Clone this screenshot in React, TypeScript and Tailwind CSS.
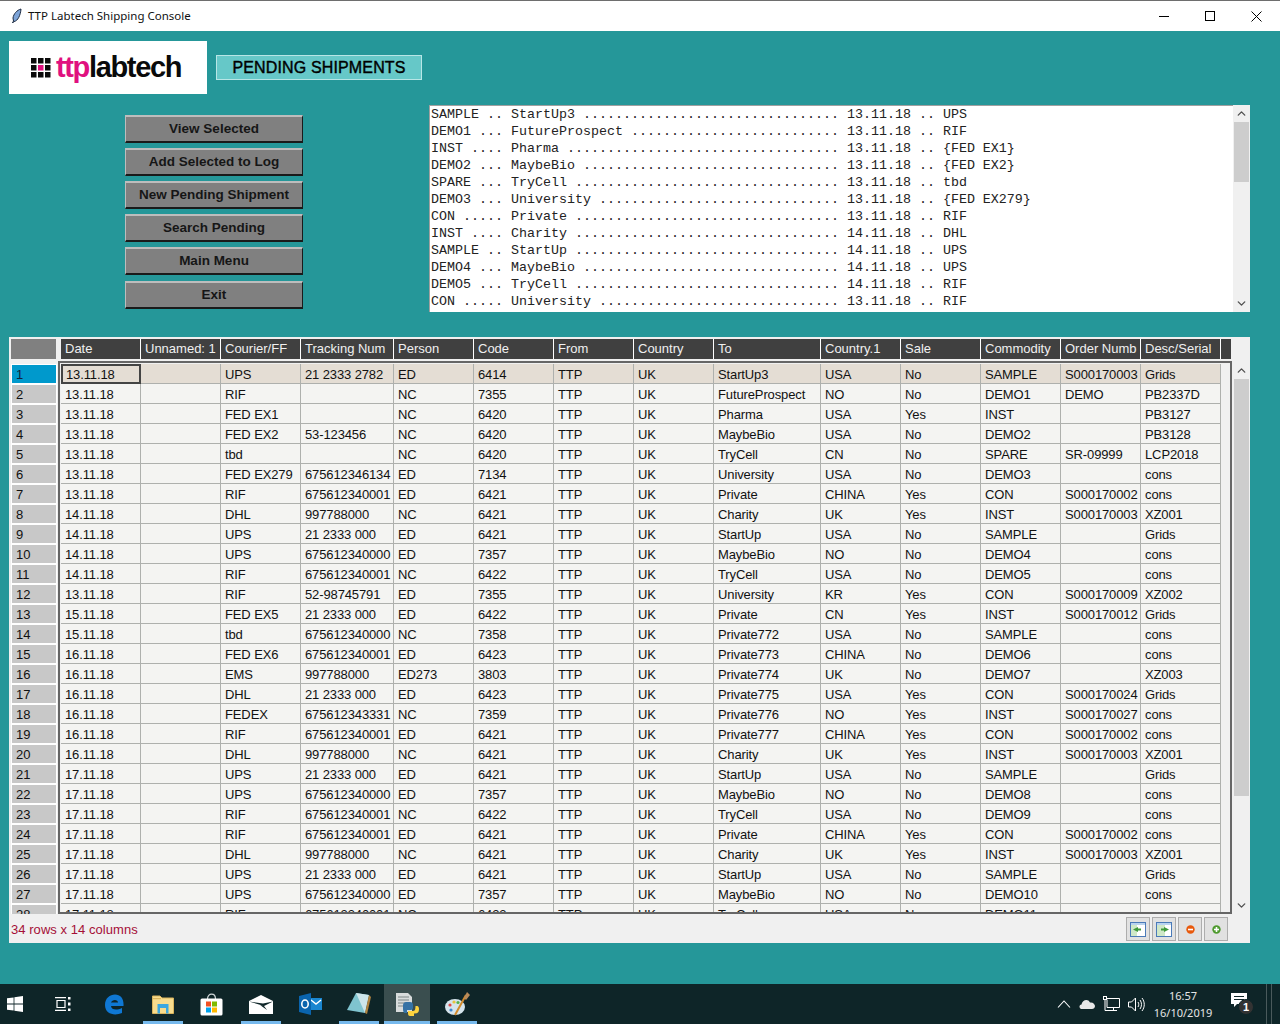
import React from 'react'
import { ChevronUp, ChevronDown } from 'lucide-react'

const columns = ['Date', 'Unnamed: 1', 'Courier/FF', 'Tracking Num', 'Person', 'Code', 'From', 'Country', 'To', 'Country.1', 'Sale', 'Commodity', 'Order Numb', 'Desc/Serial']

const rows: string[][] = [
  ['13.11.18', '', 'UPS', '21 2333 2782', 'ED', '6414', 'TTP', 'UK', 'StartUp3', 'USA', 'No', 'SAMPLE', 'S000170003', 'Grids'],
  ['13.11.18', '', 'RIF', '', 'NC', '7355', 'TTP', 'UK', 'FutureProspect', 'NO', 'No', 'DEMO1', 'DEMO', 'PB2337D'],
  ['13.11.18', '', 'FED EX1', '', 'NC', '6420', 'TTP', 'UK', 'Pharma', 'USA', 'Yes', 'INST', '', 'PB3127'],
  ['13.11.18', '', 'FED EX2', '53-123456', 'NC', '6420', 'TTP', 'UK', 'MaybeBio', 'USA', 'No', 'DEMO2', '', 'PB3128'],
  ['13.11.18', '', 'tbd', '', 'NC', '6420', 'TTP', 'UK', 'TryCell', 'CN', 'No', 'SPARE', 'SR-09999', 'LCP2018'],
  ['13.11.18', '', 'FED EX279', '675612346134', 'ED', '7134', 'TTP', 'UK', 'University', 'USA', 'No', 'DEMO3', '', 'cons'],
  ['13.11.18', '', 'RIF', '675612340001', 'ED', '6421', 'TTP', 'UK', 'Private', 'CHINA', 'Yes', 'CON', 'S000170002', 'cons'],
  ['14.11.18', '', 'DHL', '997788000', 'NC', '6421', 'TTP', 'UK', 'Charity', 'UK', 'Yes', 'INST', 'S000170003', 'XZ001'],
  ['14.11.18', '', 'UPS', '21 2333 000', 'ED', '6421', 'TTP', 'UK', 'StartUp', 'USA', 'No', 'SAMPLE', '', 'Grids'],
  ['14.11.18', '', 'UPS', '675612340000', 'ED', '7357', 'TTP', 'UK', 'MaybeBio', 'NO', 'No', 'DEMO4', '', 'cons'],
  ['14.11.18', '', 'RIF', '675612340001', 'NC', '6422', 'TTP', 'UK', 'TryCell', 'USA', 'No', 'DEMO5', '', 'cons'],
  ['13.11.18', '', 'RIF', '52-98745791', 'ED', '7355', 'TTP', 'UK', 'University', 'KR', 'Yes', 'CON', 'S000170009', 'XZ002'],
  ['15.11.18', '', 'FED EX5', '21 2333 000', 'ED', '6422', 'TTP', 'UK', 'Private', 'CN', 'Yes', 'INST', 'S000170012', 'Grids'],
  ['15.11.18', '', 'tbd', '675612340000', 'NC', '7358', 'TTP', 'UK', 'Private772', 'USA', 'No', 'SAMPLE', '', 'cons'],
  ['16.11.18', '', 'FED EX6', '675612340001', 'ED', '6423', 'TTP', 'UK', 'Private773', 'CHINA', 'No', 'DEMO6', '', 'cons'],
  ['16.11.18', '', 'EMS', '997788000', 'ED273', '3803', 'TTP', 'UK', 'Private774', 'UK', 'No', 'DEMO7', '', 'XZ003'],
  ['16.11.18', '', 'DHL', '21 2333 000', 'ED', '6423', 'TTP', 'UK', 'Private775', 'USA', 'Yes', 'CON', 'S000170024', 'Grids'],
  ['16.11.18', '', 'FEDEX', '675612343331', 'NC', '7359', 'TTP', 'UK', 'Private776', 'NO', 'Yes', 'INST', 'S000170027', 'cons'],
  ['16.11.18', '', 'RIF', '675612340001', 'ED', '6421', 'TTP', 'UK', 'Private777', 'CHINA', 'Yes', 'CON', 'S000170002', 'cons'],
  ['16.11.18', '', 'DHL', '997788000', 'NC', '6421', 'TTP', 'UK', 'Charity', 'UK', 'Yes', 'INST', 'S000170003', 'XZ001'],
  ['17.11.18', '', 'UPS', '21 2333 000', 'ED', '6421', 'TTP', 'UK', 'StartUp', 'USA', 'No', 'SAMPLE', '', 'Grids'],
  ['17.11.18', '', 'UPS', '675612340000', 'ED', '7357', 'TTP', 'UK', 'MaybeBio', 'NO', 'No', 'DEMO8', '', 'cons'],
  ['17.11.18', '', 'RIF', '675612340001', 'NC', '6422', 'TTP', 'UK', 'TryCell', 'USA', 'No', 'DEMO9', '', 'cons'],
  ['17.11.18', '', 'RIF', '675612340001', 'ED', '6421', 'TTP', 'UK', 'Private', 'CHINA', 'Yes', 'CON', 'S000170002', 'cons'],
  ['17.11.18', '', 'DHL', '997788000', 'NC', '6421', 'TTP', 'UK', 'Charity', 'UK', 'Yes', 'INST', 'S000170003', 'XZ001'],
  ['17.11.18', '', 'UPS', '21 2333 000', 'ED', '6421', 'TTP', 'UK', 'StartUp', 'USA', 'No', 'SAMPLE', '', 'Grids'],
  ['17.11.18', '', 'UPS', '675612340000', 'ED', '7357', 'TTP', 'UK', 'MaybeBio', 'NO', 'No', 'DEMO10', '', 'cons'],
  ['17.11.18', '', 'RIF', '675612340001', 'NC', '6422', 'TTP', 'UK', 'TryCell', 'USA', 'No', 'DEMO11', '', 'cons'],
]

const logLines: [string, string, string, string][] = [
  ['SAMPLE', 'StartUp3', '13.11.18', 'UPS'],
  ['DEMO1', 'FutureProspect', '13.11.18', 'RIF'],
  ['INST', 'Pharma', '13.11.18', '{FED EX1}'],
  ['DEMO2', 'MaybeBio', '13.11.18', '{FED EX2}'],
  ['SPARE', 'TryCell', '13.11.18', 'tbd'],
  ['DEMO3', 'University', '13.11.18', '{FED EX279}'],
  ['CON', 'Private', '13.11.18', 'RIF'],
  ['INST', 'Charity', '14.11.18', 'DHL'],
  ['SAMPLE', 'StartUp', '14.11.18', 'UPS'],
  ['DEMO4', 'MaybeBio', '14.11.18', 'UPS'],
  ['DEMO5', 'TryCell', '14.11.18', 'RIF'],
  ['CON', 'University', '13.11.18', 'RIF'],
]

const formatLine = ([a, b, d, c]: [string, string, string, string]) =>
  `${a} ${'.'.repeat(8 - a.length)} ${b} ${'.'.repeat(40 - b.length)} ${d} .. ${c}`

const buttons = ['View Selected', 'Add Selected to Log', 'New Pending Shipment', 'Search Pending', 'Main Menu', 'Exit']

const gridCols = 'grid grid-cols-[80px_80px_80px_93px_80px_80px_80px_80px_107px_80px_80px_80px_80px_80px]'

const Logo = () => (
  <div className="w-[198px] h-[53px] bg-white flex items-center pl-[22px] shrink-0">
    <svg width="20" height="20" viewBox="0 0 20 20" className="shrink-0">
      {[0, 7, 14].map((y) =>
        [0, 7, 14].map((x) => (
          <rect key={`${x}-${y}`} x={x} y={y} width="5.5" height="5.5" fill={x === 7 && y === 7 ? '#e0107f' : '#0a0a0a'} />
        ))
      )}
    </svg>
    <span className="ml-[5px] text-[29px] leading-none font-bold tracking-[-1.35px] font-['Liberation_Sans',sans-serif] text-[#0a0a0a]">
      <span className="text-[#e0107f]">ttp</span>labtech
    </span>
  </div>
)

const ScrollArrowUp = () => <ChevronUp size={13} strokeWidth={2.5} className="text-[#505050]" />
const ScrollArrowDown = () => <ChevronDown size={13} strokeWidth={2.5} className="text-[#505050]" />

const PanelIcon = ({ flip }: { flip?: boolean }) => (
  <svg width="16" height="15" viewBox="0 0 16 15">
    <rect x="0.5" y="0.5" width="15" height="14" fill="#b9d3ee" stroke="#4a7ab8" />
    <rect x="1" y="3" width="14" height="11" fill="#fff" />
    {flip ? <rect x="1" y="3" width="8" height="11" fill="#cfe8c8" /> : <rect x="1" y="3" width="6" height="11" fill="#cfe8c8" />}
    <path d={flip ? 'M8 5 L13 7.5 L8 10 Z' : 'M8 5 L3 7.5 L8 10 Z'} fill="#3f9a3a" />
    <rect x={flip ? 5 : 7} y="6.5" width="4" height="2" fill="#3f9a3a" />
  </svg>
)

const DotIcon = ({ color, plus }: { color: string; plus?: boolean }) => (
  <svg width="9" height="9" viewBox="0 0 9 9">
    <circle cx="4.5" cy="4.5" r="4.2" fill={color} />
    <rect x="2" y="3.7" width="5" height="1.6" fill="#fff" />
    {plus && <rect x="3.7" y="2" width="1.6" height="5" fill="#fff" />}
  </svg>
)

const Underlined = ({ on, active, w = 'w-[48px]', children }: { on?: boolean; active?: boolean; w?: string; children: React.ReactNode }) => (
  <div className={`relative h-full flex items-center justify-center shrink-0 ${w} ${active ? 'bg-[#3a4e4f]' : ''}`}>
    {children}
    {on && <div className={`absolute bottom-0 h-[3px] bg-[#76b9ed] ${active ? 'left-0 right-0' : 'left-[4px] right-[4px]'}`} />}
  </div>
)

export default function App() {
  return (
    <div className="w-[1280px] h-[1024px] flex flex-col overflow-hidden font-['Liberation_Sans',sans-serif] text-[13px]">
      {/* title bar */}
      <div className="h-[31px] bg-white border-t border-[#6e6e6e] flex items-center shrink-0">
        <svg width="14" height="16" viewBox="0 0 14 16" className="ml-[10px]">
          <path d="M11 1 C7 2 3.5 6 3 10 L3.5 13 L2.5 15 L4 13.5 C8 13 10.5 7 11 1 Z" fill="#7da4d8" stroke="#1c2a40" strokeWidth="1" />
        </svg>
        <span className="ml-[4px] text-[11.5px] font-['Noto_Sans',sans-serif] text-[#111]">TTP Labtech Shipping Console</span>
        <div className="ml-auto mr-[1px] flex items-center text-black">
          <div className="w-[46px] flex justify-center">
            <svg width="10" height="10" viewBox="0 0 10 10"><rect x="0" y="5" width="10" height="1" fill="#000" /></svg>
          </div>
          <div className="w-[46px] flex justify-center">
            <svg width="10" height="10" viewBox="0 0 10 10"><rect x="0.5" y="0.5" width="9" height="9" fill="none" stroke="#000" /></svg>
          </div>
          <div className="w-[46px] flex justify-center">
            <svg width="11" height="11" viewBox="0 0 11 11"><path d="M0.5 0.5 L10.5 10.5 M10.5 0.5 L0.5 10.5" stroke="#000" strokeWidth="1" /></svg>
          </div>
        </div>
      </div>

      {/* main area */}
      <div className="flex-1 bg-[#259799] px-[9px] pt-[10px] flex flex-col">
        <div className="flex items-start gap-[9px]">
          <Logo />
          <div className="mt-[14px] w-[206px] h-[25px] bg-[#66c8c8] border border-[#b8e6e6] flex items-center justify-center text-[16px] font-medium tracking-[0.15px] text-black [-webkit-text-stroke:0.4px_black]">
            PENDING SHIPMENTS
          </div>
        </div>

        <div className="mt-[11px] flex items-start">
          <div className="ml-[116px] pt-[10px] w-[178px] flex flex-col gap-[5px] shrink-0">
            {buttons.map((b) => (
              <div
                key={b}
                className={`h-[28px] pt-px bg-[#808080] border-t-2 border-l border-r border-b-2 border-t-[#bdbdbd] border-l-[#bdbdbd] border-r-[#1a1a1a] border-b-[#1a1a1a] flex items-center justify-center text-[13.5px] font-bold text-[#161616] ${b === 'Exit' ? 'mt-px' : ''}`}
              >
                {b}
              </div>
            ))}
          </div>
          <div className="ml-[126px] w-[821px] h-[207px] bg-white flex">
            <pre className="flex-1 overflow-hidden pl-px border-t border-l border-[#a0a0a0] font-['Liberation_Mono',monospace] text-[13.33px] leading-[17px] text-[#222]">
              {logLines.map(formatLine).join('\n')}
            </pre>
            <div className="w-[17px] bg-[#f0f0f0] flex flex-col items-center justify-between">
              <div className="w-full">
                <div className="h-[17px] flex items-center justify-center"><ScrollArrowUp /></div>
                <div className="h-[60px] bg-[#cdcdcd] mx-px" />
              </div>
              <div className="h-[17px] flex items-center justify-center"><ScrollArrowDown /></div>
            </div>
          </div>
        </div>

        {/* table panel */}
        <div className="mt-[25px] w-[1241px] h-[606px] bg-[#f0f0f0] pt-[2px] flex flex-col">
          <div className="flex h-[20px] pl-[2px]">
            <div className="w-[45px] bg-[#808080] shrink-0" />
            <div className="ml-[5px] w-[1170px] bg-[#404040] flex">
              <div className={gridCols}>
                {columns.map((c) => (
                  <div key={c} className="pl-[4px] leading-[20px] text-[#f0f0f0] border-r border-white whitespace-nowrap overflow-hidden">
                    {c}
                  </div>
                ))}
              </div>
            </div>
          </div>

          <div className="flex mt-[2px] h-[553px]">
            <div className="ml-[2px] w-[47px] pt-[3px] overflow-hidden shrink-0">
              {rows.map((_, i) => (
                <div
                  key={i}
                  className={`h-[20px] mr-[1px] border border-white pl-[4px] leading-[20px] ${i === 0 ? 'bg-[#0099cc] text-[#10233a]' : 'bg-[#c8c8c8] text-[#111]'}`}
                >
                  {i + 1}
                </div>
              ))}
            </div>
            <div className="w-[1174px] border-2 border-[#666666] pt-px pl-px bg-[#f0f0f0] overflow-hidden shrink-0">
              {rows.map((r, i) => (
                <div key={i} className={`${gridCols} w-[1160px] h-[20px] border-b border-[#aeb0ad] ${i === 0 ? 'bg-[#e4ddd4]' : 'bg-[#f4f4f2]'}`}>
                  {r.map((cell, j) => (
                    <div
                      key={j}
                      className={`whitespace-nowrap overflow-hidden tracking-[-0.12px] text-[#111] ${
                        i === 0 && j === 0 ? 'border-2 border-[#444444] pl-[3px] leading-[18px] -mb-px' : 'pl-[4px] leading-[22px] border-r border-[#aeb0ad]'
                      }`}
                    >
                      {cell}
                    </div>
                  ))}
                </div>
              ))}
            </div>
            <div className="w-[17px] ml-px flex flex-col items-center justify-between shrink-0">
              <div className="w-full">
                <div className="h-[17px] mt-px flex items-center justify-center"><ScrollArrowUp /></div>
                <div className="h-[417px] bg-[#cdcdcd] mx-px" />
              </div>
              <div className="h-[17px] flex items-center justify-center"><ScrollArrowDown /></div>
            </div>
          </div>

          <div className="flex items-start pl-[2px] pt-[3px]">
            <span className="mt-[3px] text-[#a50f37] tracking-[0.05px]">34 rows x 14 columns</span>
            <div className="ml-auto mr-[22px] flex gap-[2px]">
              {[<PanelIcon key="a" />, <PanelIcon key="b" flip />, <DotIcon key="c" color="#e8590c" />, <DotIcon key="d" color="#4e9a2e" plus />].map((icon, i) => (
                <div key={i} className="w-[24px] h-[24px] bg-[#e1e1e1] border border-[#adadad] flex items-center justify-center">
                  {icon}
                </div>
              ))}
            </div>
          </div>
        </div>
      </div>

      {/* taskbar */}
      <div className="h-[40px] bg-[#0e2528] flex items-center shrink-0 text-white">
        <Underlined w="w-[30px]">
          <svg width="16" height="16" viewBox="0 0 16 16"><path d="M0 2.3 L6.6 1.4 V7.6 H0 Z M7.4 1.3 L16 0 V7.6 H7.4 Z M0 8.4 H6.6 V14.6 L0 13.7 Z M7.4 8.4 H16 V16 L7.4 14.7 Z" fill="#fff" /></svg>
        </Underlined>
        <Underlined w="w-[48px] ml-[9px]">
          <svg width="18" height="14" viewBox="0 0 18 14" fill="none" stroke="#fff" strokeWidth="1.2"><path d="M1 0.6 H12 M3 3.5 H11 V10.5 H3 Z M1 13.4 H12" /><rect x="14" y="0" width="2.5" height="2.5" fill="#fff" stroke="none" /><rect x="14" y="5.5" width="2.5" height="3" fill="#fff" stroke="none" /><rect x="14" y="11.5" width="2.5" height="2.5" fill="#fff" stroke="none" /></svg>
        </Underlined>
        <Underlined w="w-[48px] ml-[3px]">
          <svg width="20" height="21" viewBox="0 0 20 21"><path d="M1 11 C1 4 6 0.5 11 0.5 C16.5 0.5 20 4.5 19.5 12 H7 C7.3 15.5 12 17 18 14 V19 C11 22 1 20.5 1 11 Z M7 8.5 H14 C14 5 8 5 7 8.5 Z" fill="#0f78d4" fillRule="evenodd" /></svg>
        </Underlined>
        <Underlined on w="w-[48px] ml-[1px]">
          <svg width="22" height="19" viewBox="0 0 22 19"><path d="M0.5 1 H8 L10 3 H21.5 V18.5 H0.5 Z" fill="#f7dc8d" stroke="#d9b45c" /><rect x="1" y="3" width="8" height="1.2" fill="#d9b45c" /><path d="M5.5 9 H16.5 V18.5 H14 V13 H8 V18.5 H5.5 Z" fill="#3aa7e0" /></svg>
        </Underlined>
        <Underlined w="w-[48px]">
          <svg width="23" height="23" viewBox="0 0 23 23"><path d="M7.5 6 C7.5 -0.5 15.5 -0.5 15.5 6" fill="none" stroke="#cfd6d8" strokeWidth="1.2" /><rect x="0.5" y="5.5" width="22" height="17" rx="1.5" fill="#fff" /><rect x="6" y="8.5" width="5" height="5" fill="#f25022" /><rect x="12" y="8.5" width="5" height="5" fill="#7fba00" /><rect x="6" y="14.5" width="5" height="5" fill="#00a4ef" /><rect x="12" y="14.5" width="5" height="5" fill="#ffb900" /></svg>
        </Underlined>
        <Underlined on w="w-[48px] ml-[2px]">
          <svg width="24" height="19" viewBox="0 0 24 19"><path d="M0 6 L12 0 L24 6 V19 H0 Z" fill="#fff" /><path d="M0 6.5 L15 11 L24 6.5 L14 8.5 Z M15 11 L18 15 L11 10 Z" fill="#0e2528" /></svg>
        </Underlined>
        <Underlined w="w-[48px] ml-[1px]">
          <svg width="23" height="22" viewBox="0 0 23 22"><rect x="11" y="5" width="12" height="12" fill="#1a86d0" /><path d="M12 7 L17 11 L22 7" fill="none" stroke="#fff" strokeWidth="1.4" /><path d="M0 3 L12 0 V22 L0 19 Z" fill="#0a64ad" /><ellipse cx="6" cy="11" rx="3.2" ry="4" fill="none" stroke="#fff" strokeWidth="1.6" /></svg>
        </Underlined>
        <Underlined on w="w-[48px] ml-[1px]">
          <svg width="25" height="24" viewBox="0 0 25 24"><path d="M9 1 L22 3 L18 21 L0 18 Z" fill="#7fc4cf" /><path d="M9 1 L22 3 L18 21 Z" fill="#cde5ea" /><path d="M22 3 L24 5 L20 22 L18 21 Z" fill="#b0833f" /></svg>
        </Underlined>
        <Underlined on active w="w-[46px] ml-[1px]">
          <svg width="25" height="25" viewBox="0 0 25 25"><path d="M1 1 H13 L17 5 V20 H1 Z" fill="#d8dcdc" /><path d="M3 5 H14 M3 8 H14 M3 11 H14 M3 14 H10" stroke="#7c8585" strokeWidth="1.2" /><path d="M8 14 C8 10 10 10 13 10 H15 C17 10 18 11 18 13 V16 C18 18 16 18 15 18 H12 V21 H10 C8.5 21 8 19 8 17 Z" fill="#3572a5" /><path d="M24 17 C24 21 22 21.5 19 21.5 V24 H15 C13.5 24 13 23 13 21 V19 H18 C20 19 20.5 17 20.5 14 H22 C23.5 14 24 15.5 24 17 Z" fill="#fdd23e" /></svg>
        </Underlined>
        <Underlined on w="w-[48px] ml-[3px]">
          <svg width="25" height="25" viewBox="0 0 25 25"><ellipse cx="10" cy="15" rx="10" ry="8" fill="#d5e4ec" /><circle cx="5" cy="13" r="1.6" fill="#e04848" /><circle cx="9" cy="10" r="1.6" fill="#e7c23b" /><circle cx="13" cy="10.5" r="1.6" fill="#55b04f" /><circle cx="6" cy="18" r="1.6" fill="#3c86d0" /><path d="M10 23 L21 3" stroke="#d18a2c" strokeWidth="2" /><path d="M19 6 L22 0 L25 3 L21 8 Z" fill="#b98b5a" /></svg>
        </Underlined>

        <div className="ml-auto flex items-center h-full">
          <svg width="14" height="8" viewBox="0 0 14 8" fill="none" stroke="#fff" strokeWidth="1.1"><path d="M1 7.5 L7 1 L13 7.5" /></svg>
          <svg width="16" height="10" viewBox="0 0 16 10" className="ml-[8px]"><path d="M3 10 C0 10 -0.5 6 2.5 5.5 C3 1 9 -1 11 3.5 C14 3 16 5.5 16 7 C16 9 14.5 10 13 10 Z" fill="#e8e8e8" /></svg>
          <svg width="17" height="17" viewBox="0 0 17 17" fill="none" stroke="#fff" strokeWidth="1" className="ml-[8px]"><rect x="0.5" y="0.5" width="3" height="3" /><path d="M4 2.5 H16.5 V11.5 H4 V3.5 M2 3.5 V14.5 H7 M10.5 11.5 V14.5 M7 14.5 H14" /></svg>
          <svg width="17" height="15" viewBox="0 0 17 15" fill="none" stroke="#fff" strokeWidth="1" className="ml-[8px]"><path d="M0.5 5 H3.5 L7.5 1 V14 L3.5 10 H0.5 Z M10 5 C11 6.5 11 8.5 10 10 M12 3 C14 5.5 14 9.5 12 12 M14 1 C17 5 17 10 14 14" /></svg>
          <div className="w-[64px] ml-[6px] flex flex-col items-center text-[11px] leading-[17px] text-[#e6e6e6] font-['Noto_Sans',sans-serif]">
            <span>16:57</span>
            <span>16/10/2019</span>
          </div>
          <div className="relative w-[24px] h-[24px] ml-[13px] mr-[14px]">
            <svg width="16" height="15" viewBox="0 0 16 15" className="ml-[3px] mt-[1px]"><path d="M0 0 H16 V11 H6 L3 14 V11 H0 Z" fill="#fff" /><path d="M3 3.5 H13 M3 6.5 H13" stroke="#0e2528" strokeWidth="1" /></svg>
            <div className="absolute left-[10px] top-[7px] w-[16px] h-[16px] rounded-full bg-[#333] border border-[#0e2528] flex items-center justify-center text-[11px] font-bold leading-none">1</div>
          </div>
          <div className="w-[6px] h-full border-x border-[#4a5a5c]" />
          <div className="w-[8px]" />
        </div>
      </div>
    </div>
  )
}
